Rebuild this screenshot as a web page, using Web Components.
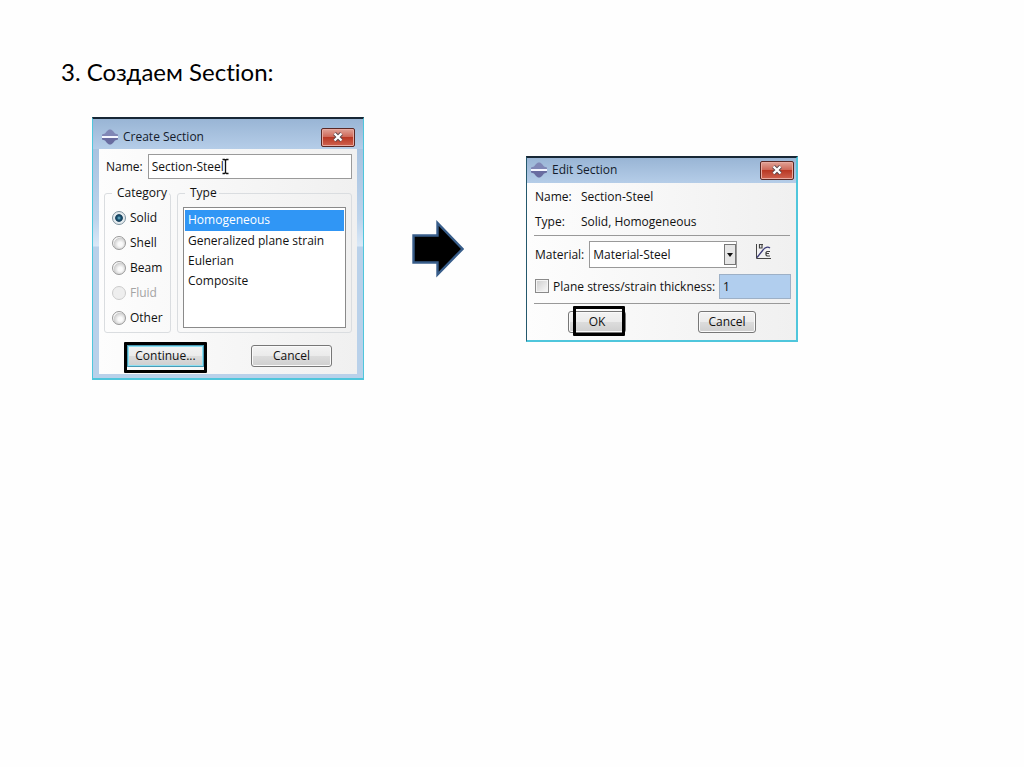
<!DOCTYPE html>
<html lang="ru">
<head>
<meta charset="utf-8">
<title>Section</title>
<style>
body { margin: 0; background: #fefefe; }
</style>
</head>
<body>
<section-slide></section-slide>
<script>
const define = (name, html, setup) => {
  const template = document.createElement('template');
  template.innerHTML = '<style>*{box-sizing:border-box}</style>' + html;
  customElements.define(name, class extends HTMLElement {
    constructor() {
      super();
      this.attachShadow({ mode: 'open' }).append(template.content.cloneNode(true));
    }
    connectedCallback() { if (setup) setup(this, this.shadowRoot); }
  });
};

define('block-arrow', `
<style>:host{display:block;width:52px} svg{display:block}</style>
<svg width="52" height="58" viewBox="0 0 52 58" aria-hidden="true">
  <path d="M1.5 15.5H25.5V3L50.5 29L25.5 54.5V42.5H1.5Z" fill="#000" stroke="#385d8a" stroke-width="2.4"/>
</svg>`);

define('push-button', `
<style>
:host{display:block;position:relative}
button{display:block;width:100%;height:22px;padding:0;border:1px solid #777;border-radius:3px;
  font:inherit;line-height:20px;color:#111;
  background:linear-gradient(#f3f3f3,#ebebeb 48%,#dcdcdc 52%,#cfcfcf);box-shadow:inset 0 0 0 1px #fafafa}
:host([default]) button{border-color:#4a9bb5;border-radius:0;box-shadow:inset 0 0 0 1px #8fe0f2}
:host([marked])::after{content:"";position:absolute;inset:var(--mark-inset,-3px);border:3px solid #000;border-radius:1px;pointer-events:none}
</style>
<button type="button"><slot></slot></button>`);

define('radio-choice', `
<style>
:host{display:block}
label{display:flex;align-items:center;gap:4px;height:25px;line-height:25px}
input{appearance:none;flex:none;width:14px;height:14px;margin:0;border:1px solid #999;border-radius:50%;
  background:radial-gradient(circle at 60% 60%,#fafafa 20%,#cfcfcf 60%,#f4f4f4 65%)}
input:checked{border-color:#7b919e;background:radial-gradient(circle at 50% 50%,#7fc4da 0,#1c5878 22%,#123a56 40%,#dfe9ee 50%,#eee 80%)}
input:disabled{border-color:#ccc;background:#eee}
:host([disabled]) label{color:#a4a4a4}
</style>
<label><input type="radio" name="category"><slot></slot></label>`, (host, root) => {
  const input = root.querySelector('input');
  input.checked = host.hasAttribute('checked');
  input.disabled = host.hasAttribute('disabled');
});

define('group-box', `
<style>
:host{display:block}
fieldset{height:100%;min-width:0;margin:0;padding:var(--group-pad,0);border:1px solid #dadde0;border-radius:3px}
legend{margin-left:var(--legend-indent,0);padding:0 2px 0 5px;line-height:16px}
</style>
<fieldset><legend><slot name="legend"></slot></legend><slot></slot></fieldset>`);

define('dialog-window', `
<style>
:host{display:block;border:1px solid #4fc6dc;border-top:2px solid #172735;border-bottom-width:2px;
  background:#b9d1ea}
header{display:flex;align-items:center;gap:5px;height:var(--bar,30px);padding:var(--bar-pad,0);
  background:linear-gradient(#99b5d5,#b5cde8)}
.logo{flex:none;display:block}
h2{flex:1;margin:0;font:inherit;line-height:18px;color:#141c2c}
.close{display:flex;align-items:center;justify-content:center;width:34px;height:19px;padding:0;border:1px solid #5a2824;border-radius:2px;
  background:linear-gradient(#e0a397,#cf6a5a 45%,#b93824 50%,#cf6350);box-shadow:inset 0 0 0 1px #e9aaa0}
.frame{padding:var(--frame,0);background:linear-gradient(#a9c3e0,#bdd4ec 70px,#d9e8f7 97px,#b9d1ea 98px)}
.body{background:linear-gradient(90deg,#fdfdfd,#f0f0f0)}
</style>
<header>
  <svg class="logo" width="16" height="16" viewBox="0 0 16 16" aria-hidden="true">
    <path d="M0 7V5.500L3 4.500 5 2l2-1.500h2L11 2l2 2.500 3 1V7Z" fill="#8087b6"/>
    <path d="M0 9v1.500l3 1L5 14l2 1.500h2L11 14l2-2.500 3-1V9Z" fill="#696ca0"/>
    <path d="M0 8h16" stroke="#f5f7ff" stroke-width="2"/>
  </svg>
  <h2></h2>
  <button class="close" type="button" aria-label="Close">
    <svg width="12" height="10" viewBox="0 0 12 10"><path d="M2.500 1.500l7 7m0-7l-7 7" stroke="#5b4a50" stroke-width="4"/><path d="M2.500 1.500l7 7m0-7l-7 7" stroke="#fff" stroke-width="2.300"/></svg>
  </button>
</header>
<div class="frame"><div class="body"><slot></slot></div></div>`, (host, root) => {
  root.querySelector('h2').textContent = host.getAttribute('heading');
});

define('create-section', `
<style>
:host{display:block;width:272px}
dialog-window{--frame:0 6px 4px;--bar:30px;--bar-pad:6px 8px 0 9px}
.content{display:flex;flex-direction:column;padding:5px 5px 6px}
.name{display:flex;align-items:center;gap:5px;padding-left:2px;position:relative}
.name input{flex:1;min-width:0;height:25px;padding:0 3px;border:1px solid #9a9a9a;background:#fff;font:inherit;color:#111}
.cursor{position:absolute;left:117px;top:4px}
.groups{display:grid;grid-template-columns:67px 1fr;gap:6px;height:148px;margin-top:6px}
.category{--group-pad:4px 0 0 7px}
.type{--group-pad:6px 5px 4px;--legend-indent:2px}
select{display:block;width:100%;height:121px;padding:2px 1px;border:1px solid #8a8a8a;border-radius:0;background:#fff;font:inherit;overflow:hidden;outline:0}
option{height:20px;min-height:20px;line-height:20px;padding:1px 3px 0;color:#111}
option:checked{height:21px;background:#3399ff linear-gradient(#3096f5,#3096f5);color:#fff}
.actions{display:flex;justify-content:space-between;padding:12px 20px 0 23px;height:35px}
push-button{width:81px}
push-button[marked]{width:77px;--mark-inset:-3px -3px -5px}
</style>
<dialog-window heading="Create Section">
  <div class="content">
    <div class="name"><label for="n">Name:</label><input id="n" value="Section-Steel">
      <svg class="cursor" width="9" height="17" viewBox="0 0 9 17" aria-hidden="true"><path d="M1.500 1.500h2l1 1 1-1h2M4.500 2v13M1.500 15.500h2l1-1 1 1h2" fill="none" stroke="#111" stroke-width="1.300"/></svg>
    </div>
    <div class="groups">
      <group-box class="category"><span slot="legend">Category</span>
        <radio-choice checked>Solid</radio-choice><radio-choice>Shell</radio-choice><radio-choice>Beam</radio-choice><radio-choice disabled>Fluid</radio-choice><radio-choice>Other</radio-choice>
      </group-box>
      <group-box class="type"><span slot="legend">Type</span>
        <select size="5" aria-label="Type"><option selected>Homogeneous</option><option>Generalized plane strain</option><option>Eulerian</option><option>Composite</option></select>
      </group-box>
    </div>
    <div class="actions"><push-button default marked>Continue...</push-button><push-button>Cancel</push-button></div>
  </div>
</dialog-window>`);

define('edit-section', `
<style>
:host{display:block;width:272px}
dialog-window{--bar:25px;--bar-pad:0 2px 0 4px;border-left-color:#24586c;border-right-width:2px}
.content{padding:1px 6px 7px 7px}
dl{display:grid;grid-template-columns:46px 1fr;margin:0;padding:0 0 1px 1px;line-height:25px}
dd{margin:0}
hr{margin:0;border:0;border-top:1px solid #999}
.row{display:flex;align-items:center;padding-left:1px}
.material{gap:5px;height:38px}
.pick{position:relative;width:148px}
select{display:block;appearance:none;width:100%;height:27px;padding:0 3px;border:1px solid #999;border-radius:0;background:#fff;font:inherit;color:#111}
.arrow{position:absolute;right:1px;top:3px;pointer-events:none}
.curve{margin:0 0 6px 13px}
.thick{gap:4px;height:25px;margin-bottom:4px;white-space:nowrap}
.thick input[type=checkbox]{appearance:none;flex:none;width:14px;height:14px;margin:0;border:1px solid #8a8a8a;background:linear-gradient(135deg,#ccc,#fafafa);box-shadow:inset 0 0 0 1px #f4f4f4}
.thick input[type=text]{width:73px;margin:0 -1px 0 auto;height:25px;padding:0 3px;border:1px solid #9db0c6;background:#b1ceee;font:inherit;color:#111;min-width:0}
.actions{display:flex;justify-content:space-between;padding:7px 34px 0}
push-button{width:58px}
push-button[marked]{--mark-inset:-5px 1px -3px 5px}
</style>
<dialog-window heading="Edit Section">
  <div class="content">
    <dl><dt>Name:</dt><dd>Section-Steel</dd><dt>Type:</dt><dd>Solid, Homogeneous</dd></dl>
    <hr>
    <div class="row material"><label for="m">Material:</label>
      <div class="pick"><select id="m"><option>Material-Steel</option></select>
        <svg class="arrow" width="12" height="21" viewBox="0 0 12 21" aria-hidden="true"><rect x=".5" y=".5" width="11" height="20" fill="#e6e6e6" stroke="#777"/><path d="M3 9h6l-3 4Z" fill="#111"/></svg></div>
      <svg class="curve" width="17" height="17" viewBox="0 0 17 17" aria-hidden="true"><path d="M1.500 1v14.500H16" fill="none" stroke="#444"/><path d="M2 14.500L8 7c2-3 5-3.500 7-2" fill="none" stroke="#3c3c78" stroke-width="1.300"/><path d="M8 1.500H4.500v3.500h2.500V1.500M15 8.500h-3l-1 1v2.500l1 1h3M11 10.500h3" fill="none" stroke="#444" stroke-width="1.200"/></svg>
    </div>
    <div class="row thick"><input id="c" type="checkbox"><label for="c">Plane stress/strain thickness:</label><input type="text" aria-label="Thickness" value="1"></div>
    <hr>
    <div class="actions"><push-button marked>OK</push-button><push-button>Cancel</push-button></div>
  </div>
</dialog-window>`);

define('section-slide', `
<style>
:host{display:block;padding:56px 61px;font:12px "Open Sans","Noto Sans",sans-serif;color:#111}
h1{margin:0 0 29px;font:24px/32px Lato,Carlito,sans-serif;font-variant-ligatures:none;color:#000}
.flow{display:flex;align-items:center;padding-left:31px}
block-arrow{flex:none;margin:0 62px 0 48px}
create-section,edit-section{flex:none}
</style>
<h1>3. Создаем Section:</h1>
<div class="flow"><create-section></create-section><block-arrow></block-arrow><edit-section></edit-section></div>`);
</script>
</body>
</html>
